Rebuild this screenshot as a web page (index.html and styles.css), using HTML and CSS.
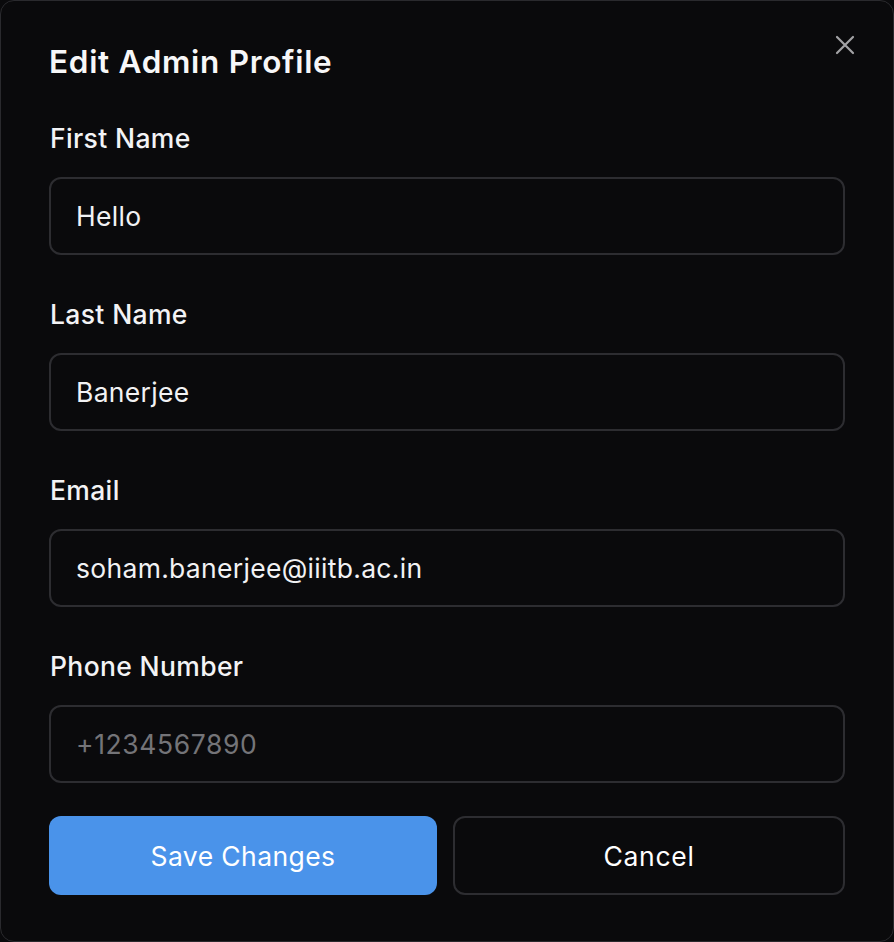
FILE: index.html
```html
<!DOCTYPE html>
<html lang="en">
<head>
<meta charset="utf-8">
<title>Edit Admin Profile</title>
<link rel="stylesheet" href="styles.css">
</head>
<body>
<div class="dialog">
  <button class="close" aria-label="Close">
    <svg width="20" height="20" viewBox="0 0 20 20"><path d="M2 2 L18 18 M18 2 L2 18" stroke="#a3a3a6" stroke-width="2.2" stroke-linecap="round" fill="none"/></svg>
  </button>
  <h1 class="title">Edit Admin Profile</h1>
  <form class="form">
    <div class="field">
      <label class="label">First Name</label>
      <input class="input" type="text" value="Hello">
    </div>
    <div class="field">
      <label class="label">Last Name</label>
      <input class="input" type="text" value="Banerjee">
    </div>
    <div class="field">
      <label class="label">Email</label>
      <input class="input" type="text" value="soham.banerjee@iiitb.ac.in">
    </div>
    <div class="field">
      <label class="label">Phone Number</label>
      <input class="input" type="text" placeholder="+1234567890">
    </div>
    <div class="actions">
      <button type="button" class="btn btn-primary">Save Changes</button>
      <button type="button" class="btn btn-secondary">Cancel</button>
    </div>
  </form>
</div>
</body>
</html>
```

FILE: styles.css
```css
* { box-sizing: border-box; }
html, body {
  margin: 0;
  padding: 0;
  background: #0a0a0c;
}
body {
  font-family: Inter, "Noto Sans", sans-serif;
  color: #f5f5f7;
}
.dialog {
  position: relative;
  width: 894px;
  height: 942px;
  background: #0a0a0c;
  border: 1px solid #2a2a2e;
  border-radius: 14px;
  padding: 43px 48px 0 48px;
}
.close {
  position: absolute;
  top: 34px;
  right: 38px;
  width: 20px;
  height: 20px;
  padding: 0;
  border: 0;
  background: transparent;
  display: flex;
}
.title {
  margin: 0;
  font-size: 31.5px;
  line-height: 36px;
  font-weight: 600;
  letter-spacing: 0.7px;
  color: #f7f7f8;
}
.form {
  display: flex;
  flex-direction: column;
  gap: 43px;
  margin-top: 42px;
}
.field {
  display: flex;
  flex-direction: column;
  gap: 23px;
}
.label {
  font-size: 26.5px;
  line-height: 32px;
  font-weight: 500;
  letter-spacing: 0.35px;
  padding-left: 1px;
  color: #f3f3f5;
}
.input {
  width: 796px;
  height: 78px;
  border: 2px solid #2d2d31;
  border-radius: 12px;
  background: #0a0a0c;
  color: #f2f2f4;
  font-family: Inter, "Noto Sans", sans-serif;
  font-size: 26.5px;
  letter-spacing: 0.3px;
  padding: 0 25px;
  outline: none;
}
.input::placeholder {
  color: #747478;
  letter-spacing: 0.6px;
}
.actions {
  display: grid;
  grid-template-columns: 388px 392px;
  gap: 16px;
  margin-top: -10px;
}
.btn {
  height: 79px;
  border-radius: 12px;
  font-family: Inter, "Noto Sans", sans-serif;
  font-size: 26.5px;
  font-weight: 400;
  letter-spacing: 0.4px;
  color: #ffffff;
  cursor: pointer;
}
.btn-primary {
  background: #4a93ea;
  border: 0;
}
.btn-secondary {
  background: #0a0a0c;
  border: 2px solid #2d2d31;
  letter-spacing: 0.7px;
}
```
